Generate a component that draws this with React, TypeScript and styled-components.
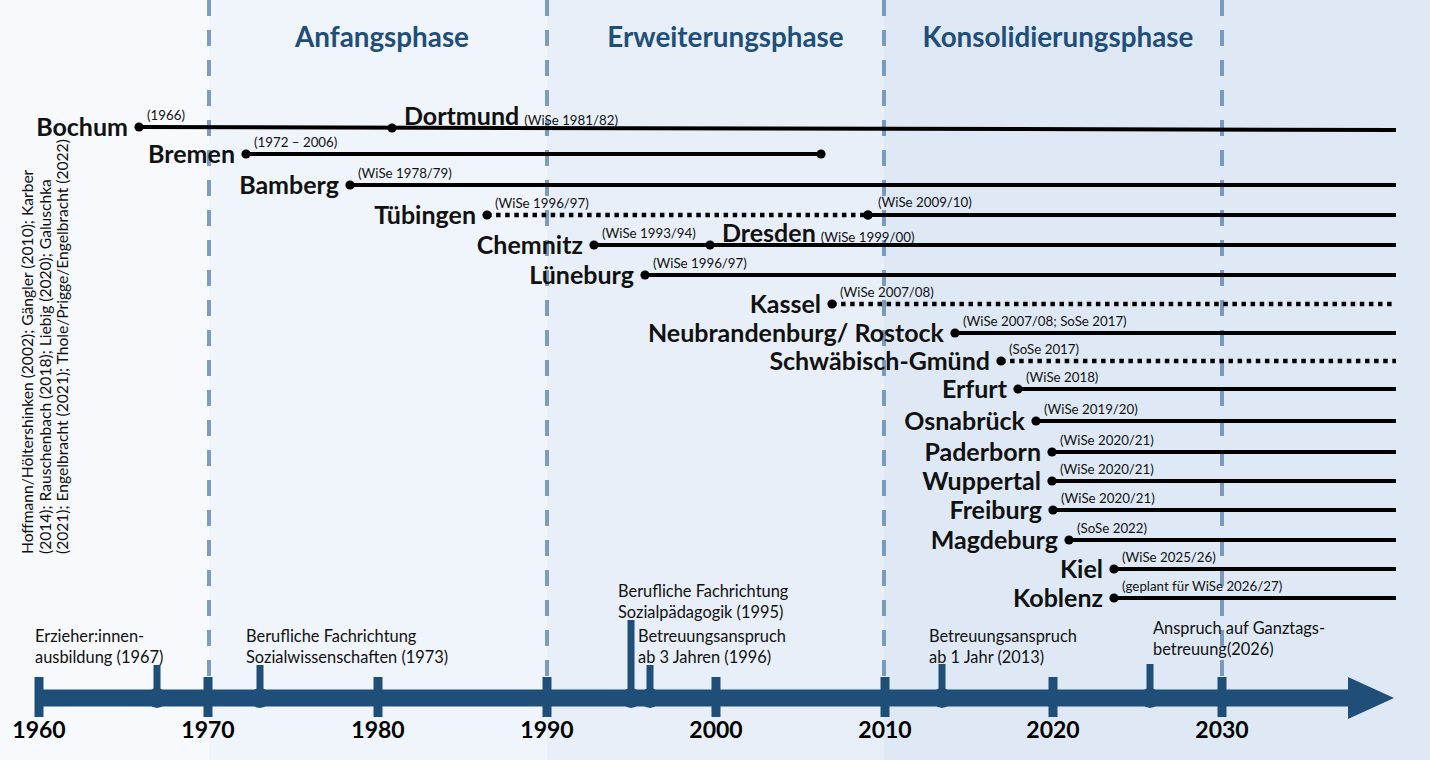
import React from 'react'
import styled, { createGlobalStyle, css } from 'styled-components'

const GlobalStyle = createGlobalStyle`
  html, body {
    margin: 0;
    padding: 0;
    background: #dfe9f5;
  }
  body {
    font-family: Lato, 'Liberation Sans', sans-serif;
  }
`

const AXIS = '#1f4e79'

const Canvas = styled.div`
  position: relative;
  width: 1430px;
  height: 760px;
  overflow: hidden;
  font-family: Lato, 'Liberation Sans', sans-serif;
  color: #111;
`

const Phases = styled.div`
  display: flex;
  height: 100%;
`

const Phase = styled.div<{ $width?: number; $bg: string; $dashed?: boolean; $shift?: number }>`
  position: relative;
  box-sizing: border-box;
  flex: ${({ $width }) => ($width ? `0 0 ${$width}px` : '1')};
  background: ${({ $bg }) => $bg};
  display: flex;
  justify-content: center;
  padding-top: 21px;
  padding-left: ${({ $shift = 0 }) => $shift * 2}px;

  ${({ $dashed }) =>
    $dashed &&
    css`
      &::before {
        content: '';
        position: absolute;
        left: -2px;
        top: 0;
        width: 4px;
        height: 700px;
        background: repeating-linear-gradient(
          to bottom,
          rgba(96, 134, 174, 0.8) 0 16px,
          transparent 16px 30px
        );
      }
    `}
`

const PhaseTitle = styled.h2`
  margin: 0;
  font-size: 27.8px;
  line-height: 32px;
  font-weight: 700;
  color: ${AXIS};
  white-space: nowrap;
`

const Chart = styled.svg`
  position: absolute;
  inset: 0;
`

const CityLabel = styled.div`
  position: absolute;
  transform: translate(-100%, -50%);
  font-size: 25px;
  line-height: 1;
  font-weight: 700;
  color: #111;
  white-space: nowrap;
`

const InlineCity = styled.div`
  position: absolute;
  display: flex;
  align-items: baseline;
  gap: 5px;
  transform: translateY(-50%);
  font-size: 25px;
  line-height: 1;
  font-weight: 700;
  color: #111;
  white-space: nowrap;
`

const Note = styled.span<{ $floating?: boolean }>`
  font-size: 13.3px;
  line-height: 1;
  font-weight: 400;
  color: #111;
  white-space: nowrap;
  ${({ $floating }) =>
    $floating &&
    css`
      position: absolute;
      transform: translateY(-50%);
    `}
`

const EventLabel = styled.div`
  position: absolute;
  font-size: 16.4px;
  line-height: 21px;
  color: #111;
  white-space: nowrap;
`

const YearLabel = styled.div`
  position: absolute;
  top: 716px;
  transform: translateX(-50%);
  font-size: 23px;
  line-height: 27px;
  font-weight: 700;
  color: #000;
`

const RefNote = styled.div`
  position: absolute;
  left: 19px;
  top: 150px;
  height: 404px;
  writing-mode: vertical-rl;
  transform: rotate(180deg);
  font-size: 15.6px;
  line-height: 17.5px;
  color: #111;
  white-space: nowrap;
`

type Row = {
  name: string
  x: number
  y: number
  note: string
  end?: number
  dotted?: boolean
}

const rows: Row[] = [
  { name: 'Bochum', x: 139, y: 127, note: '(1966)' },
  { name: 'Bremen', x: 246, y: 154, note: '(1972 – 2006)', end: 821 },
  { name: 'Bamberg', x: 350, y: 185, note: '(WiSe 1978/79)' },
  { name: 'Tübingen', x: 487, y: 215, note: '(WiSe 1996/97)', end: 868, dotted: true },
  { name: 'Chemnitz', x: 594, y: 245, note: '(WiSe 1993/94)' },
  { name: 'Lüneburg', x: 645, y: 275, note: '(WiSe 1996/97)' },
  { name: 'Kassel', x: 832, y: 304, note: '(WiSe 2007/08)', dotted: true },
  { name: 'Neubrandenburg/ Rostock', x: 955, y: 333, note: '(WiSe 2007/08; SoSe 2017)' },
  { name: 'Schwäbisch-Gmünd', x: 1001, y: 361, note: '(SoSe 2017)', dotted: true },
  { name: 'Erfurt', x: 1018, y: 389, note: '(WiSe 2018)' },
  { name: 'Osnabrück', x: 1036, y: 421, note: '(WiSe 2019/20)' },
  { name: 'Paderborn', x: 1052, y: 452, note: '(WiSe 2020/21)' },
  { name: 'Wuppertal', x: 1052, y: 481, note: '(WiSe 2020/21)' },
  { name: 'Freiburg', x: 1053, y: 510, note: '(WiSe 2020/21)' },
  { name: 'Magdeburg', x: 1069, y: 540, note: '(SoSe 2022)' },
  { name: 'Kiel', x: 1114, y: 569, note: '(WiSe 2025/26)' },
  { name: 'Koblenz', x: 1114, y: 598, note: '(geplant für WiSe 2026/27)' },
]

// later starts on an existing line
const joins = [
  { name: 'Dortmund', x: 392, y: 128, note: '(WiSe 1981/82)', labelled: true },
  { name: 'Tübingen', x: 868, y: 215, note: '(WiSe 2009/10)', labelled: false },
  { name: 'Dresden', x: 710, y: 245, note: '(WiSe 1999/00)', labelled: true },
]

const LINE_END = 1396
const AXIS_Y = 698

const decades = [
  { year: '1960', x: 39 },
  { year: '1970', x: 208 },
  { year: '1980', x: 378 },
  { year: '1990', x: 547 },
  { year: '2000', x: 716 },
  { year: '2010', x: 885 },
  { year: '2020', x: 1053 },
  { year: '2030', x: 1222 },
]

const events = [
  { x: 157, top: 665, label: ['Erzieher:innen-', 'ausbildung (1967)'], lx: 35, ly: 625 },
  { x: 260, top: 665, label: ['Berufliche Fachrichtung', 'Sozialwissenschaften (1973)'], lx: 246, ly: 625 },
  { x: 631, top: 620, label: ['Berufliche Fachrichtung', 'Sozialpädagogik (1995)'], lx: 618, ly: 580 },
  { x: 650, top: 665, label: ['Betreuungsanspruch', 'ab 3 Jahren (1996)'], lx: 638, ly: 625 },
  { x: 942, top: 664, label: ['Betreuungsanspruch', 'ab 1 Jahr (2013)'], lx: 929, ly: 625 },
  { x: 1150, top: 664, label: ['Anspruch auf Ganztags-', 'betreuung(2026)'], lx: 1153, ly: 617 },
]

export default function App() {
  return (
    <>
      <GlobalStyle />
      <Canvas>
        <Phases>
          <Phase $width={209} $bg="#f7f9fd" />
          <Phase $width={338} $bg="#f0f4fb" $dashed $shift={4}>
            <PhaseTitle>Anfangsphase</PhaseTitle>
          </Phase>
          <Phase $width={337} $bg="#e8eff8" $dashed $shift={10}>
            <PhaseTitle>Erweiterungsphase</PhaseTitle>
          </Phase>
          <Phase $width={338} $bg="#dfe9f5" $dashed $shift={5}>
            <PhaseTitle>Konsolidierungsphase</PhaseTitle>
          </Phase>
          <Phase $bg="#dfe9f5" $dashed />
        </Phases>

        <Chart width={1430} height={760} viewBox="0 0 1430 760">
          {rows.map((r) => {
            const solidFrom = r.dotted && r.end ? r.end : r.x
            const tilt = r.name === 'Bochum' ? 3 : 0
            return (
              <g key={r.name}>
                {r.dotted && (
                  <line
                    x1={r.x}
                    y1={r.y}
                    x2={r.end ?? LINE_END}
                    y2={r.y}
                    stroke="#000"
                    strokeWidth={4.5}
                    strokeDasharray="4.5 4.6"
                  />
                )}
                {(!r.dotted || r.end) && (
                  <line
                    x1={solidFrom}
                    y1={r.y}
                    x2={r.dotted ? LINE_END : r.end ?? LINE_END}
                    y2={r.y + tilt}
                    stroke="#000"
                    strokeWidth={4}
                  />
                )}
                <circle cx={r.x} cy={r.y} r={4.6} fill="#000" />
                {r.end && <circle cx={r.end} cy={r.y} r={4.6} fill="#000" />}
              </g>
            )
          })}
          {joins.map((j) => (
            <circle key={j.name + j.x} cx={j.x} cy={j.y} r={4.6} fill="#000" />
          ))}

          <rect x={38} y={AXIS_Y - 8.5} width={1312} height={17} fill={AXIS} />
          <polygon points={`1348,677 1394,${AXIS_Y} 1348,719`} fill={AXIS} />
          {decades.map((d) => (
            <rect key={d.year} x={d.x - 4.5} y={677} width={9} height={40} fill={AXIS} />
          ))}
          {events.map((e) => (
            <g key={e.x}>
              <rect x={e.x - 3.5} y={e.top} width={7} height={AXIS_Y - e.top} fill={AXIS} />
              <circle cx={e.x} cy={AXIS_Y} r={10} fill={AXIS} />
            </g>
          ))}
        </Chart>

        <RefNote>
          Hoffmann/Höltershinken (2002); Gängler (2010); Karber
          <br />
          (2014); Rauschenbach (2018); Liebig (2020); Galuschka
          <br />
          (2021); Engelbracht (2021); Thole/Prigge/Engelbracht (2022)
        </RefNote>

        {rows.map((r) => (
          <React.Fragment key={r.name}>
            <CityLabel style={{ left: r.x - 11, top: r.y - 1 }}>{r.name}</CityLabel>
            <Note $floating style={{ left: r.x + 8, top: r.y - 11 }}>
              {r.note}
            </Note>
          </React.Fragment>
        ))}

        {joins.map((j) =>
          j.labelled ? (
            <InlineCity key={j.name} style={{ left: j.x + 12, top: j.y - 13 }}>
              {j.name}
              <Note>{j.note}</Note>
            </InlineCity>
          ) : (
            <Note key={j.name + j.x} $floating style={{ left: j.x + 10, top: j.y - 12 }}>
              {j.note}
            </Note>
          ),
        )}

        {events.map((e) => (
          <EventLabel key={e.x} style={{ left: e.lx, top: e.ly }}>
            {e.label[0]}
            <br />
            {e.label[1]}
          </EventLabel>
        ))}

        {decades.map((d) => (
          <YearLabel key={d.year} style={{ left: d.x }}>
            {d.year}
          </YearLabel>
        ))}
      </Canvas>
    </>
  )
}
